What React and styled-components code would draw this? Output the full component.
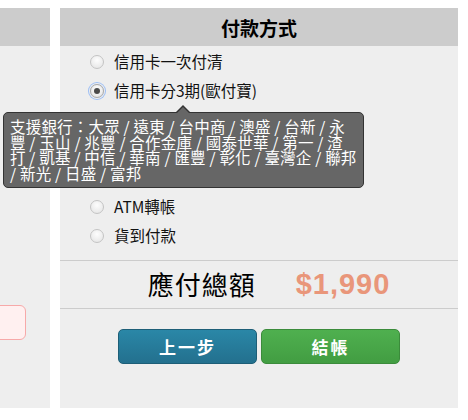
import React from "react";
import styled, { createGlobalStyle } from "styled-components";

const GlobalStyle = createGlobalStyle`
  body {
    margin: 8px 10px 0 0;
    background: #fff;
    font-family: "Noto Sans CJK TC", "Noto Sans", sans-serif;
    color: #000;
  }
`;

const Page = styled.div`
  position: relative;
  display: flex;
  gap: 10px;
  height: 400px;
`;

const LeftPanel = styled.div`
  width: 50px;
  flex-shrink: 0;
  background: #eee;
  overflow: hidden;
  display: flex;
  flex-direction: column;
`;

const PanelHeader = styled.div`
  height: 38px;
  flex-shrink: 0;
  background: #ccc;
  display: flex;
  align-items: center;
  justify-content: center;
`;

const LeftBody = styled.div`
  flex: 1;
  display: flex;
  justify-content: flex-end;
  align-items: flex-start;
  padding-top: 259px;
`;

const PinkInput = styled.div`
  flex-shrink: 0;
  width: 200px;
  height: 33px;
  margin-right: 24px;
  border: 1px solid #f7a9a9;
  border-radius: 6px;
  background: #fff0f0;
`;

const RightPanel = styled.div`
  width: 398px;
  flex-shrink: 0;
  background: #eee;
  display: flex;
  flex-direction: column;
`;

const Title = styled.h2`
  margin: 0;
  font-size: 19px;
  font-weight: 600;
  line-height: 1;
`;

const OptionList = styled.div`
  padding: 1.5px 0 0 30px;
`;

const Option = styled.label`
  height: 29px;
  display: flex;
  align-items: center;
  gap: 10px;
  font-size: 15.5px;
  line-height: 1;
  color: #111;
`;

const Radio = styled.span`
  position: relative;
  width: 12px;
  height: 12px;
  border-radius: 50%;
  border: 1px solid #c4c4c4;
  background: radial-gradient(circle at 50% 35%, #fdfdfd, #e2e2e2);
  flex-shrink: 0;

  ${(p) =>
    p.$checked &&
    `
    border-color: #a9a9a9;
    box-shadow: 0 0 0 1px #eee, 0 0 0 2px #9cbef5;
    &::after {
      content: "";
      position: absolute;
      left: 3px;
      top: 3px;
      width: 6px;
      height: 6px;
      border-radius: 50%;
      background: #4a4a4a;
    }
  `}
`;

const Divider = styled.div`
  border-top: 1px solid #ccc;
  margin-top: ${(p) => p.$gap || 0}px;
`;

const TotalRow = styled.div`
  height: 47px;
  display: flex;
  align-items: center;
  justify-content: center;
  gap: 40px;
  padding-left: 20px;
`;

const TotalLabel = styled.span`
  font-size: 26px;
  line-height: 1;
  letter-spacing: 1px;
`;

const TotalPrice = styled.span`
  font-family: "Liberation Sans", Arial, sans-serif;
  font-weight: bold;
  font-size: 29px;
  letter-spacing: 1px;
  line-height: 1;
  color: #e9967a;
`;

const ButtonRow = styled.div`
  display: flex;
  justify-content: center;
  gap: 4px;
  padding-top: 20px;
`;

const Button = styled.button`
  width: 139px;
  height: 35px;
  border-radius: 5px;
  border: 1px solid ${(p) => (p.$variant === "green" ? "#3b8b3b" : "#1d5e77")};
  background: ${(p) =>
    p.$variant === "green"
      ? "linear-gradient(#4fb04f, #429d42)"
      : "linear-gradient(#2a87a7, #23708e)"};
  color: #fff;
  font-family: "Noto Sans CJK TC", sans-serif;
  font-size: 17px;
  font-weight: bold;
  letter-spacing: 2px;
  cursor: pointer;
  padding: 0;
`;

const Tooltip = styled.div`
  position: absolute;
  left: 3px;
  top: 104px;
  width: 347px;
  padding: 6px;
  background: #666;
  border: 1px solid #333;
  border-radius: 5px;
  color: #fff;
  font-size: 15.5px;
  letter-spacing: 0.2px;
  line-height: 15.5px;

  &::before,
  &::after {
    content: "";
    position: absolute;
    border-style: solid;
    border-color: transparent;
  }
  &::before {
    left: 171px;
    top: -8px;
    border-width: 0 8px 8px 8px;
    border-bottom-color: #333;
  }
  &::after {
    left: 172px;
    top: -6px;
    border-width: 0 7px 7px 7px;
    border-bottom-color: #666;
  }
`;

const TipLine = styled.span`
  display: block;
  white-space: nowrap;
`;

// rows 3-5 sit under the bank tooltip, so only their radios are drawn
const options = [
  { id: "once", label: "信用卡一次付清" },
  { id: "i3", label: "信用卡分3期(歐付寶)", checked: true },
  { id: "i6", label: "" },
  { id: "i12", label: "" },
  { id: "web", label: "" },
  { id: "atm", label: "ATM轉帳" },
  { id: "cod", label: "貨到付款" },
];

const tipLines = [
  "支援銀行：大眾 / 遠東 / 台中商 / 澳盛 / 台新 / 永",
  "豐 / 玉山 / 兆豐 / 合作金庫 / 國泰世華 / 第一 / 渣",
  "打 / 凱基 / 中信 / 華南 / 匯豐 / 彰化 / 臺灣企 / 聯邦",
  "/ 新光 / 日盛 / 富邦",
];

const App = () => {
  return (
    <>
      <GlobalStyle />
      <Page>
        <LeftPanel>
          <PanelHeader />
          <LeftBody>
            <PinkInput />
          </LeftBody>
        </LeftPanel>
        <RightPanel>
          <PanelHeader>
            <Title>付款方式</Title>
          </PanelHeader>
          <OptionList>
            {options.map((o) => (
              <Option key={o.id}>
                <Radio $checked={o.checked} />
                {o.label}
              </Option>
            ))}
          </OptionList>
          <Divider $gap={9} />
          <TotalRow>
            <TotalLabel>應付總額</TotalLabel>
            <TotalPrice>$1,990</TotalPrice>
          </TotalRow>
          <Divider />
          <ButtonRow>
            <Button>上一步</Button>
            <Button $variant="green">結帳</Button>
          </ButtonRow>
        </RightPanel>
        <Tooltip>
          {tipLines.map((t) => (
            <TipLine key={t}>{t}</TipLine>
          ))}
        </Tooltip>
      </Page>
    </>
  );
};

export default App;
